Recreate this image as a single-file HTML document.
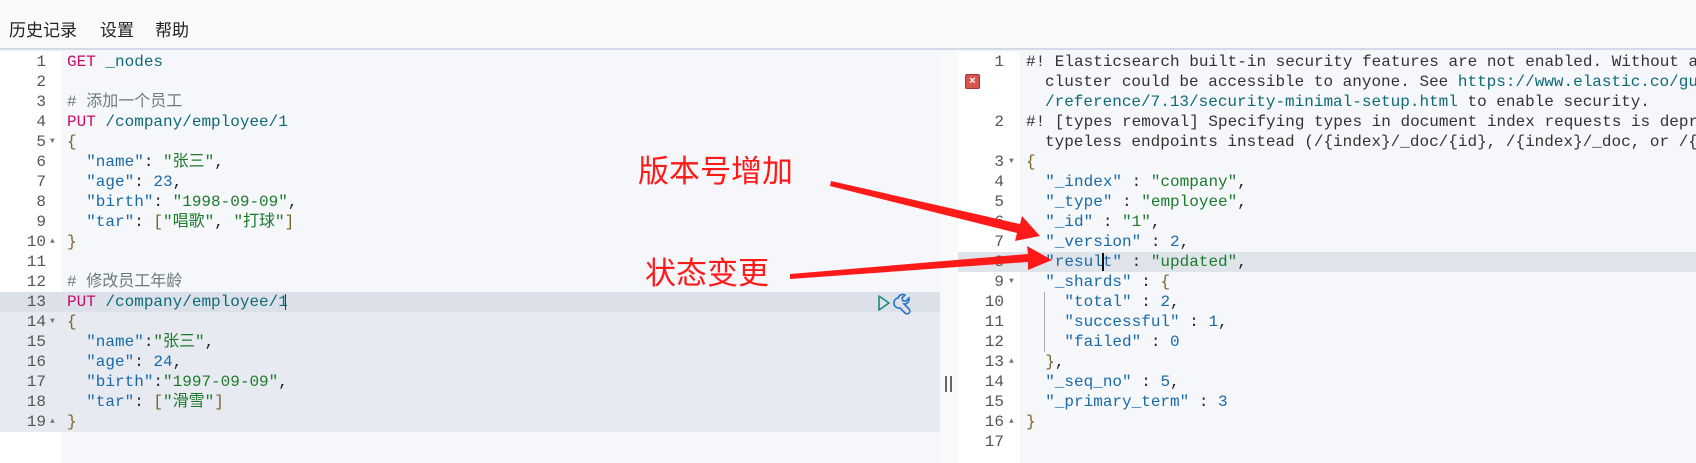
<!DOCTYPE html>
<html><head><meta charset="utf-8"><style>
*{margin:0;padding:0;box-sizing:border-box}
body{width:1696px;height:463px;overflow:hidden;background:#f5f7fa;position:relative;font-family:"Liberation Mono","Noto Sans CJK SC",monospace;font-size:16px}
.hdr{position:absolute;left:0;top:0;width:1696px;height:50px;background:#f8f9fb;border-bottom:2px solid #d3dae6}
.hdr span{position:absolute;top:16px;font-family:"Liberation Sans","Noto Sans CJK SC",sans-serif;font-size:17px;color:#222}
.gut{position:absolute;background:#fff}
.ln{position:absolute;height:20px;line-height:20px;white-space:pre;color:#222}
.n{position:absolute;height:20px;line-height:20px;text-align:right;color:#555;width:40px}
.f{position:absolute;font-size:8px;color:#777;line-height:20px;height:20px}
.m{color:#c80a68}.u{color:#0f6a78}.c{color:#6b7b78}.k{color:#1a6aa8}.s{color:#1c7a2c}.b{color:#7a6428}.d{color:#1a6aa8}
.ann{position:absolute;color:#ff1a1a;font-family:"Noto Sans CJK SC",sans-serif;font-size:31px;line-height:34px}
</style></head><body>
<div class="hdr"><span style="left:9px">历史记录</span><span style="left:100px">设置</span><span style="left:155px">帮助</span></div>

<div class="gut" style="left:0;top:52px;width:62px;height:411px"></div>
<div style="position:absolute;left:0;top:292px;width:940px;height:140px;background:#e7eaf1"></div>
<div style="position:absolute;left:0;top:292px;width:940px;height:20px;background:#dce1e9"></div>
<div style="position:absolute;left:940px;top:52px;width:18px;height:411px;background:#f8f9fb"></div>
<div style="position:absolute;left:945px;top:376px;width:2px;height:16px;background:#666"></div>
<div style="position:absolute;left:950px;top:376px;width:2px;height:16px;background:#666"></div>
<div class="gut" style="left:958px;top:52px;width:62px;height:411px"></div>
<div style="position:absolute;left:958px;top:252px;width:738px;height:20px;background:#dfe4eb"></div>

<!-- left numbers -->
<div class="n" style="left:6px;top:52px">1</div>
<div class="n" style="left:6px;top:72px">2</div>
<div class="n" style="left:6px;top:92px">3</div>
<div class="n" style="left:6px;top:112px">4</div>
<div class="n" style="left:6px;top:132px">5</div><div class="f" style="left:50px;top:132px">▼</div>
<div class="n" style="left:6px;top:152px">6</div>
<div class="n" style="left:6px;top:172px">7</div>
<div class="n" style="left:6px;top:192px">8</div>
<div class="n" style="left:6px;top:212px">9</div>
<div class="n" style="left:6px;top:232px">10</div><div class="f" style="left:50px;top:232px">▲</div>
<div class="n" style="left:6px;top:252px">11</div>
<div class="n" style="left:6px;top:272px">12</div>
<div class="n" style="left:6px;top:292px">13</div>
<div class="n" style="left:6px;top:312px">14</div><div class="f" style="left:50px;top:312px">▼</div>
<div class="n" style="left:6px;top:332px">15</div>
<div class="n" style="left:6px;top:352px">16</div>
<div class="n" style="left:6px;top:372px">17</div>
<div class="n" style="left:6px;top:392px">18</div>
<div class="n" style="left:6px;top:412px">19</div><div class="f" style="left:50px;top:412px">▲</div>

<!-- left code -->
<div class="ln" style="left:67px;top:52px"><span class="m">GET</span> <span class="u">_nodes</span></div>
<div class="ln c" style="left:67px;top:92px"># 添加一个员工</div>
<div class="ln" style="left:67px;top:112px"><span class="m">PUT</span> <span class="u">/company/employee/1</span></div>
<div class="ln b" style="left:67px;top:132px">{</div>
<div class="ln" style="left:67px;top:152px">  <span class="k">"name"</span>: <span class="s">"张三"</span>,</div>
<div class="ln" style="left:67px;top:172px">  <span class="k">"age"</span>: <span class="d">23</span>,</div>
<div class="ln" style="left:67px;top:192px">  <span class="k">"birth"</span>: <span class="s">"1998-09-09"</span>,</div>
<div class="ln" style="left:67px;top:212px">  <span class="k">"tar"</span>: <span class="b">[</span><span class="s">"唱歌"</span>, <span class="s">"打球"</span><span class="b">]</span></div>
<div class="ln b" style="left:67px;top:232px">}</div>
<div class="ln c" style="left:67px;top:272px"># 修改员工年龄</div>
<div class="ln" style="left:67px;top:292px"><span class="m">PUT</span> <span class="u">/company/employee/1</span></div>
<div style="position:absolute;left:285px;top:294px;width:1px;height:16px;background:#333"></div>
<div class="ln b" style="left:67px;top:312px">{</div>
<div class="ln" style="left:67px;top:332px">  <span class="k">"name"</span>:<span class="s">"张三"</span>,</div>
<div class="ln" style="left:67px;top:352px">  <span class="k">"age"</span>: <span class="d">24</span>,</div>
<div class="ln" style="left:67px;top:372px">  <span class="k">"birth"</span>:<span class="s">"1997-09-09"</span>,</div>
<div class="ln" style="left:67px;top:392px">  <span class="k">"tar"</span>: <span class="b">[</span><span class="s">"滑雪"</span><span class="b">]</span></div>
<div class="ln b" style="left:67px;top:412px">}</div>

<svg style="position:absolute;left:875px;top:292px" width="50" height="26" viewBox="0 0 50 26">
<path d="M4 4 L14 11 L4 18 Z" fill="none" stroke="#1a8a7a" stroke-width="1.6" stroke-linejoin="round"/>
<path d="M23 6 a5 5 0 0 1 7-3 l-3 3 1 3 3 0 3-3 a5 5 0 0 1-5 6 l5 5 a2.5 2.5 0 0 1-4 4 l-5-5 a5 5 0 0 1-2-10z" fill="none" stroke="#2a74c8" stroke-width="1.6"/>
</svg>

<!-- right numbers -->
<div class="n" style="left:964px;top:52px">1</div>
<div style="position:absolute;left:965px;top:74px;width:15px;height:15px;background:#d9534f;border:1px solid #a33;border-radius:2px;color:#fff;font:bold 11px 'Liberation Sans',sans-serif;text-align:center;line-height:13px">×</div>
<div class="n" style="left:964px;top:112px">2</div>
<div class="n" style="left:964px;top:152px">3</div><div class="f" style="left:1009px;top:152px">▼</div>
<div class="n" style="left:964px;top:172px">4</div>
<div class="n" style="left:964px;top:192px">5</div>
<div class="n" style="left:964px;top:212px">6</div>
<div class="n" style="left:964px;top:232px">7</div>
<div class="n" style="left:964px;top:252px">8</div>
<div class="n" style="left:964px;top:272px">9</div><div class="f" style="left:1009px;top:272px">▼</div>
<div class="n" style="left:964px;top:292px">10</div>
<div class="n" style="left:964px;top:312px">11</div>
<div class="n" style="left:964px;top:332px">12</div>
<div class="n" style="left:964px;top:352px">13</div><div class="f" style="left:1009px;top:352px">▲</div>
<div class="n" style="left:964px;top:372px">14</div>
<div class="n" style="left:964px;top:392px">15</div>
<div class="n" style="left:964px;top:412px">16</div><div class="f" style="left:1009px;top:412px">▲</div>
<div class="n" style="left:964px;top:432px">17</div>

<div class="ln" style="left:1026px;top:52px;color:#333">#! Elasticsearch built-in security features are not enabled. Without au</div>
<div class="ln" style="left:1045px;top:72px;color:#333">cluster could be accessible to anyone. See <span class="u">https://www.elastic.co/gui</span></div>
<div class="ln u" style="left:1045px;top:92px">/reference/7.13/security-minimal-setup.html <span style="color:#333">to enable security.</span></div>
<div class="ln" style="left:1026px;top:112px;color:#333">#! [types removal] Specifying types in document index requests is depre</div>
<div class="ln" style="left:1045px;top:132px;color:#333">typeless endpoints instead (/{index}/_doc/{id}, /{index}/_doc, or /{i</div>
<div class="ln b" style="left:1026px;top:152px">{</div>
<div class="ln" style="left:1026px;top:172px">  <span class="k">"_index"</span> : <span class="s">"company"</span>,</div>
<div class="ln" style="left:1026px;top:192px">  <span class="k">"_type"</span> : <span class="s">"employee"</span>,</div>
<div class="ln" style="left:1026px;top:212px">  <span class="k">"_id"</span> : <span class="s">"1"</span>,</div>
<div class="ln" style="left:1026px;top:232px">  <span class="k">"_version"</span> : <span class="d">2</span>,</div>
<div class="ln" style="left:1026px;top:252px">  <span class="k">"result"</span> : <span class="s">"updated"</span>,</div>
<div style="position:absolute;left:1102px;top:253px;width:2px;height:18px;background:#111"></div>
<div class="ln" style="left:1026px;top:272px">  <span class="k">"_shards"</span> : <span class="b">{</span></div>
<div style="position:absolute;left:1044px;top:292px;width:1px;height:60px;background:#aaa"></div>
<div class="ln" style="left:1026px;top:292px">    <span class="k">"total"</span> : <span class="d">2</span>,</div>
<div class="ln" style="left:1026px;top:312px">    <span class="k">"successful"</span> : <span class="d">1</span>,</div>
<div class="ln" style="left:1026px;top:332px">    <span class="k">"failed"</span> : <span class="d">0</span></div>
<div class="ln" style="left:1026px;top:352px">  <span class="b">}</span>,</div>
<div class="ln" style="left:1026px;top:372px">  <span class="k">"_seq_no"</span> : <span class="d">5</span>,</div>
<div class="ln" style="left:1026px;top:392px">  <span class="k">"_primary_term"</span> : <span class="d">3</span></div>
<div class="ln b" style="left:1026px;top:412px">}</div>

<div class="ann" style="left:638px;top:152px">版本号增加</div>
<div class="ann" style="left:645px;top:254px">状态变更</div>
<svg style="position:absolute;left:0;top:0" width="1696" height="463">
<polygon points="831,181 1020,224 1022,216 1040,236 1015,241 1017,233 830,186" fill="#ff1a1a"/>
<polygon points="790,274 1028,254 1027,246 1052,260 1028,270 1028,262 790,279" fill="#ff1a1a"/>
</svg>
</body></html>
